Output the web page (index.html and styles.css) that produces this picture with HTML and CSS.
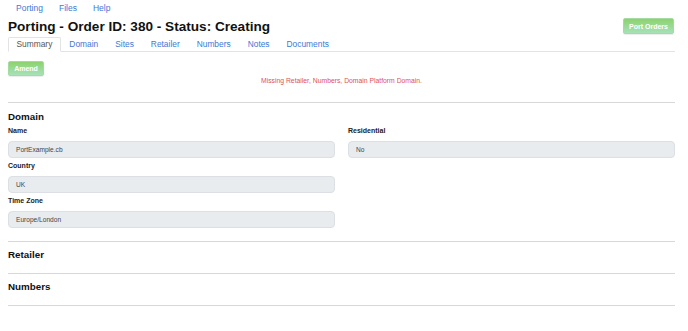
FILE: index.html
```html
<!DOCTYPE html>
<html>
<head>
<meta charset="utf-8">
<link rel="stylesheet" href="styles.css">
</head>
<body>
<nav class="topnav">
  <a href="#">Porting</a>
  <a href="#">Files</a>
  <a href="#">Help</a>
</nav>
<main class="page">
  <div class="title-row">
    <h1 class="title">Porting - Order ID: 380 - Status: Creating</h1>
    <button class="btn-green btn-port">Port Orders</button>
  </div>
  <ul class="tabs">
    <li class="tab active">Summary</li>
    <li class="tab">Domain</li>
    <li class="tab">Sites</li>
    <li class="tab">Retailer</li>
    <li class="tab">Numbers</li>
    <li class="tab">Notes</li>
    <li class="tab">Documents</li>
  </ul>
  <div class="actions">
    <button class="btn-green btn-amend">Amend</button>
  </div>
  <p class="error">Missing Retailer, Numbers, Domain Platform Domain.</p>
  <hr class="rule">
  <section class="section">
    <h2 class="section-title">Domain</h2>
    <div class="grid">
      <div class="col">
        <label class="field-label">Name</label>
        <div class="field">PortExample.cb</div>
        <label class="field-label">Country</label>
        <div class="field">UK</div>
        <label class="field-label">Time Zone</label>
        <div class="field">Europe/London</div>
      </div>
      <div class="col">
        <label class="field-label">Residential</label>
        <div class="field">No</div>
      </div>
    </div>
  </section>
  <hr class="rule">
  <section class="section small">
    <h2 class="section-title">Retailer</h2>
  </section>
  <hr class="rule">
  <section class="section small">
    <h2 class="section-title">Numbers</h2>
  </section>
  <hr class="rule">
</main>
</body>
</html>
```

FILE: styles.css
```css
* { box-sizing: border-box; }
body {
  margin: 0;
  font-family: "Liberation Sans", Arial, sans-serif;
  color: #222;
  background: #fff;
}
.topnav {
  display: flex;
  gap: 16px;
  padding: 3px 0 0 16px;
  height: 16px;
  font-size: 8.5px;
  line-height: 11px;
}
.topnav a {
  color: #3d78d8;
  text-decoration: none;
}
.page {
  padding: 0 13px 0 8px;
}
.title-row {
  display: flex;
  justify-content: space-between;
  align-items: center;
  height: 20px;
  margin-top: 0;
}
.title {
  margin: 0;
  font-size: 13.6px;
  font-weight: bold;
  color: #111;
}
.btn-green {
  border: 1px solid #a3dba0;
  border-radius: 2px;
  background: linear-gradient(#8cd26e, #a6e2b8);
  color: #fff;
  font-family: "Liberation Sans", Arial, sans-serif;
  font-weight: bold;
  font-size: 7px;
  padding: 0;
  box-shadow: 0 1px 1px rgba(0,0,0,0.08);
}
.btn-port {
  width: 51px;
  height: 16px;
  margin-right: 1px;
}
.tabs {
  list-style: none;
  margin: 1px 0 0;
  padding: 0;
  display: flex;
  height: 15px;
  border-bottom: 1px solid #e3e3e3;
}
.tab {
  font-size: 8.4px;
  line-height: 13px;
  padding: 1px 8.5px 0;
  color: #3d78d8;
}
.tab.active {
  color: #555;
  border: 1px solid #e3e3e3;
  border-bottom-color: #fff;
  border-radius: 2px 2px 0 0;
  padding: 0 7.5px;
  margin-bottom: -1px;
  height: 15px;
}
.actions {
  margin-top: 5px;
  height: 15px;
}
.btn-amend {
  width: 36px;
  height: 15px;
}
.error {
  margin: 4px 0 0;
  text-align: center;
  color: #e0505c;
  font-size: 6.8px;
  line-height: 10px;
}
.rule {
  border: 0;
  border-top: 1px solid #d8d8d8;
  margin: 16px 0 0;
}
.section {
  padding-top: 7px;
}
.section-title {
  margin: 0;
  font-size: 9.8px;
  font-weight: bold;
  color: #111;
  line-height: 13px;
}
.grid {
  display: grid;
  grid-template-columns: 1fr 1fr;
  column-gap: 13px;
  padding-bottom: 13px;
}
.col {
  display: flex;
  flex-direction: column;
}
.field-label {
  font-size: 7px;
  font-weight: bold;
  color: #222;
  line-height: 10px;
  margin-top: 3px;
  margin-bottom: 5px;
}
.field {
  height: 17px;
  background: #e9ecef;
  border: 1px solid #dcdfe3;
  border-radius: 4px;
  font-size: 6.6px;
  line-height: 15px;
  padding-left: 7px;
  color: #444;
}
.section.small {
  padding-top: 6px;
  padding-bottom: 12px;
}
section + .rule { margin-top: 0; }
```
